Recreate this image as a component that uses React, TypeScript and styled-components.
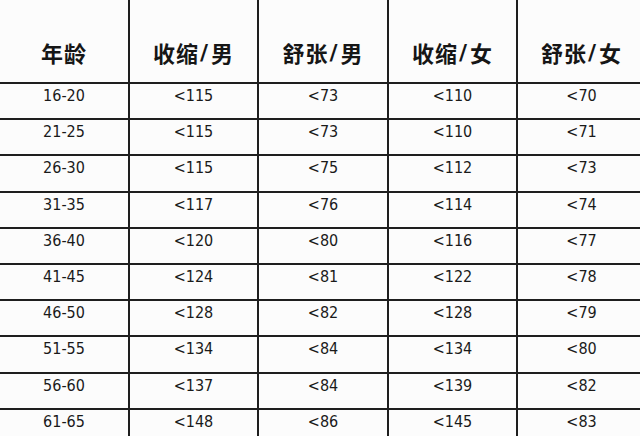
import React from 'react';
import styled, { createGlobalStyle } from 'styled-components';

const GlobalStyle = createGlobalStyle`
  html, body {
    margin: 0;
    padding: 0;
    background: #fcfcfc;
    overflow: hidden;
  }
`;

const Page = styled.div`
  width: 640px;
  height: 436px;
  overflow: hidden;
`;

const Table = styled.div`
  display: grid;
  grid-template-columns: 130px 129px 130px 129px 129px;
  grid-template-rows: 84px;
  grid-auto-rows: 36.2px;
  width: 647px;
`;

const Cell = styled.div`
  box-sizing: border-box;
  border-right: 2px solid #1e1e1e;
  border-bottom: 2px solid #1e1e1e;
  display: flex;
  justify-content: center;
  align-items: flex-start;
  padding-top: 2px;
  font-family: 'DejaVu Sans Condensed', 'DejaVu Sans', 'Liberation Sans', sans-serif;
  font-stretch: condensed;
  font-size: 16px;
  color: #1a1a1a;
  white-space: nowrap;
`;

const HeaderCell = styled(Cell)`
  align-items: center;
  padding-top: 22px;
  font-family: 'Noto Sans CJK SC', 'Noto Sans', sans-serif;
  font-stretch: normal;
  font-weight: 700;
  font-size: 22px;
  letter-spacing: 1px;
  color: #161616;
`;

const Slash = styled.span`
  font-family: 'DejaVu Sans', sans-serif;
  font-weight: 700;
  margin: 0 2px 0 1px;
`;

const headers = [
  ['年龄'],
  ['收缩', '男'],
  ['舒张', '男'],
  ['收缩', '女'],
  ['舒张', '女'],
];

const rows = [
  ['16-20', '<115', '<73', '<110', '<70'],
  ['21-25', '<115', '<73', '<110', '<71'],
  ['26-30', '<115', '<75', '<112', '<73'],
  ['31-35', '<117', '<76', '<114', '<74'],
  ['36-40', '<120', '<80', '<116', '<77'],
  ['41-45', '<124', '<81', '<122', '<78'],
  ['46-50', '<128', '<82', '<128', '<79'],
  ['51-55', '<134', '<84', '<134', '<80'],
  ['56-60', '<137', '<84', '<139', '<82'],
  ['61-65', '<148', '<86', '<145', '<83'],
];

export default function App() {
  return (
    <Page>
      <GlobalStyle />
      <Table>
        {headers.map((h, i) => (
          <HeaderCell key={i}>
            {h[0]}
            {h[1] && (
              <>
                <Slash>/</Slash>
                {h[1]}
              </>
            )}
          </HeaderCell>
        ))}
        {rows.map((r, i) =>
          r.map((v, j) => <Cell key={`${i}-${j}`}>{v}</Cell>)
        )}
      </Table>
    </Page>
  );
}
